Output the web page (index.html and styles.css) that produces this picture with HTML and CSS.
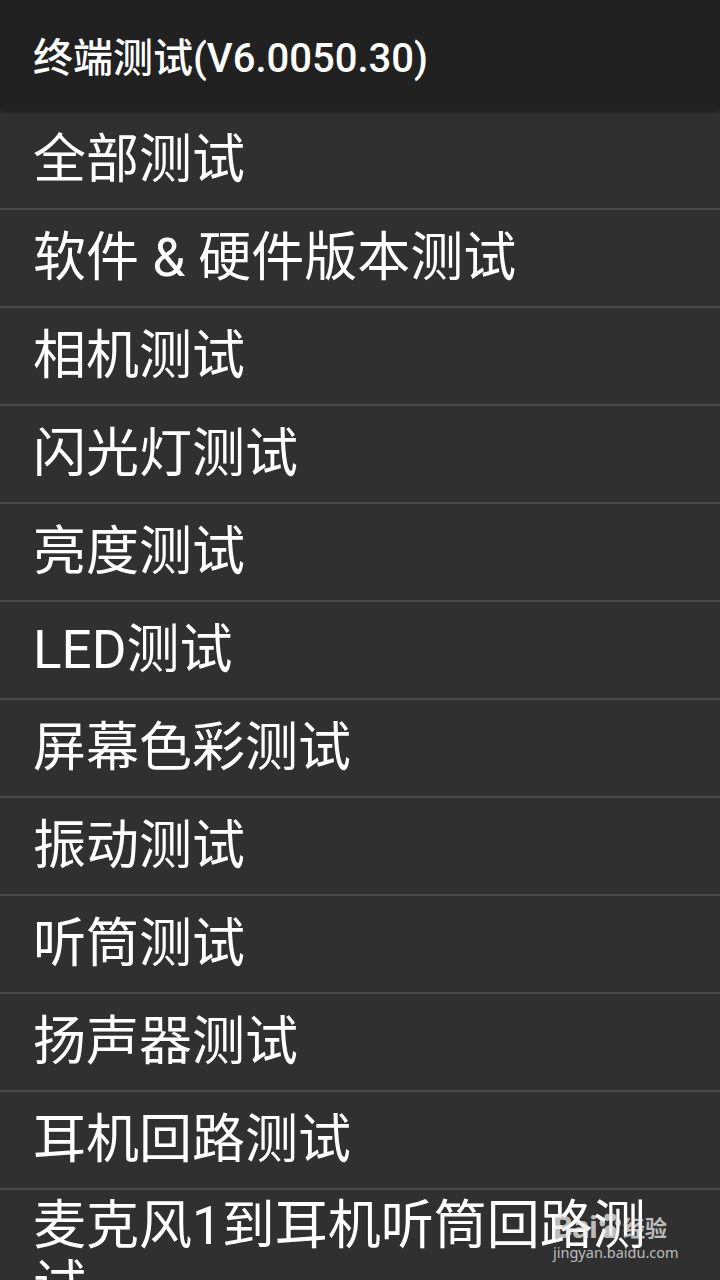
FILE: index.html
```html
<!DOCTYPE html>
<html lang="zh-CN">
<head>
  <meta charset="UTF-8">
  <meta name="viewport" content="width=device-width, initial-scale=1.0">
  <title>终端测试</title>
  <link rel="stylesheet" href="styles.css">
</head>
<body>

  <div class="app">
    <div class="title-bar">终端测试(V6.0050.30)</div>

    <ul class="test-list">
      <li>全部测试</li>
      <li>软件 &amp; 硬件版本测试</li>
      <li>相机测试</li>
      <li>闪光灯测试</li>
      <li>亮度测试</li>
      <li>LED测试</li>
      <li>屏幕色彩测试</li>
      <li>振动测试</li>
      <li>听筒测试</li>
      <li>扬声器测试</li>
      <li>耳机回路测试</li>
      <li>麦克风1到耳机听筒回路测试</li>
    </ul>

    <!-- watermark -->
    <div class="watermark">
      <div class="wm-top">
        <span class="wm-bai">Bai</span>
        <svg class="wm-paw" width="24" height="26" viewBox="0 0 22 24">
          <ellipse cx="4" cy="9" rx="2.6" ry="3.4" />
          <ellipse cx="8.5" cy="4" rx="2.6" ry="3.4" />
          <ellipse cx="14" cy="4" rx="2.6" ry="3.4" />
          <ellipse cx="18.5" cy="9" rx="2.6" ry="3.4" />
          <path d="M11 11c-4 0-7.5 5-7.5 8.5 0 3 3 3.5 7.5 3.5s7.5-.5 7.5-3.5C18.5 16 15 11 11 11z" />
        </svg>
        <span class="wm-jy">经验</span>
      </div>
      <div class="wm-url">jingyan.baidu.com</div>
    </div>
  </div>

</body>
</html>
```

FILE: styles.css
```css
body {
  margin: 0;
  padding: 0;
  background-color: #303030;
  font-family: Roboto, "Noto Sans CJK SC", sans-serif;
  color: #fff;
}

.app {
  position: relative;
  width: 720px;
  height: 1280px;
  overflow: hidden;
  background-color: #303030;
}

.title-bar {
  height: 110px;
  padding: 0 33px;
  display: flex;
  align-items: center;
  box-sizing: border-box;
  background-color: #212121;
  font-size: 40px;
  font-weight: 500;
  box-shadow: 0 2px 3px rgba(0, 0, 0, 0.35);
  position: relative;
  z-index: 1;
}

.test-list {
  list-style-type: none;
  margin: 0;
  padding: 2px 0 0;
}

.test-list li {
  min-height: 98px;
  padding: 6px 33px;
  box-sizing: border-box;
  display: flex;
  align-items: center;
  border-bottom: 2px solid #4a4a4a;
  font-size: 53px;
  line-height: 60px;
}

.watermark {
  position: absolute;
  left: 553px;
  top: 1209px;
  color: rgba(235, 235, 235, 0.75);
  font-family: "Noto Sans", "Noto Sans CJK SC", sans-serif;
}

.wm-top {
  display: flex;
  align-items: center;
  height: 34px;
}

.wm-bai {
  font-size: 30px;
  font-weight: bold;
  letter-spacing: -1px;
}

.wm-paw {
  fill: rgba(235, 235, 235, 0.75);
  margin: 0 1px;
}

.wm-jy {
  font-size: 22px;
  font-weight: bold;
}

.wm-url {
  font-size: 14.5px;
  line-height: 18px;
}
```
